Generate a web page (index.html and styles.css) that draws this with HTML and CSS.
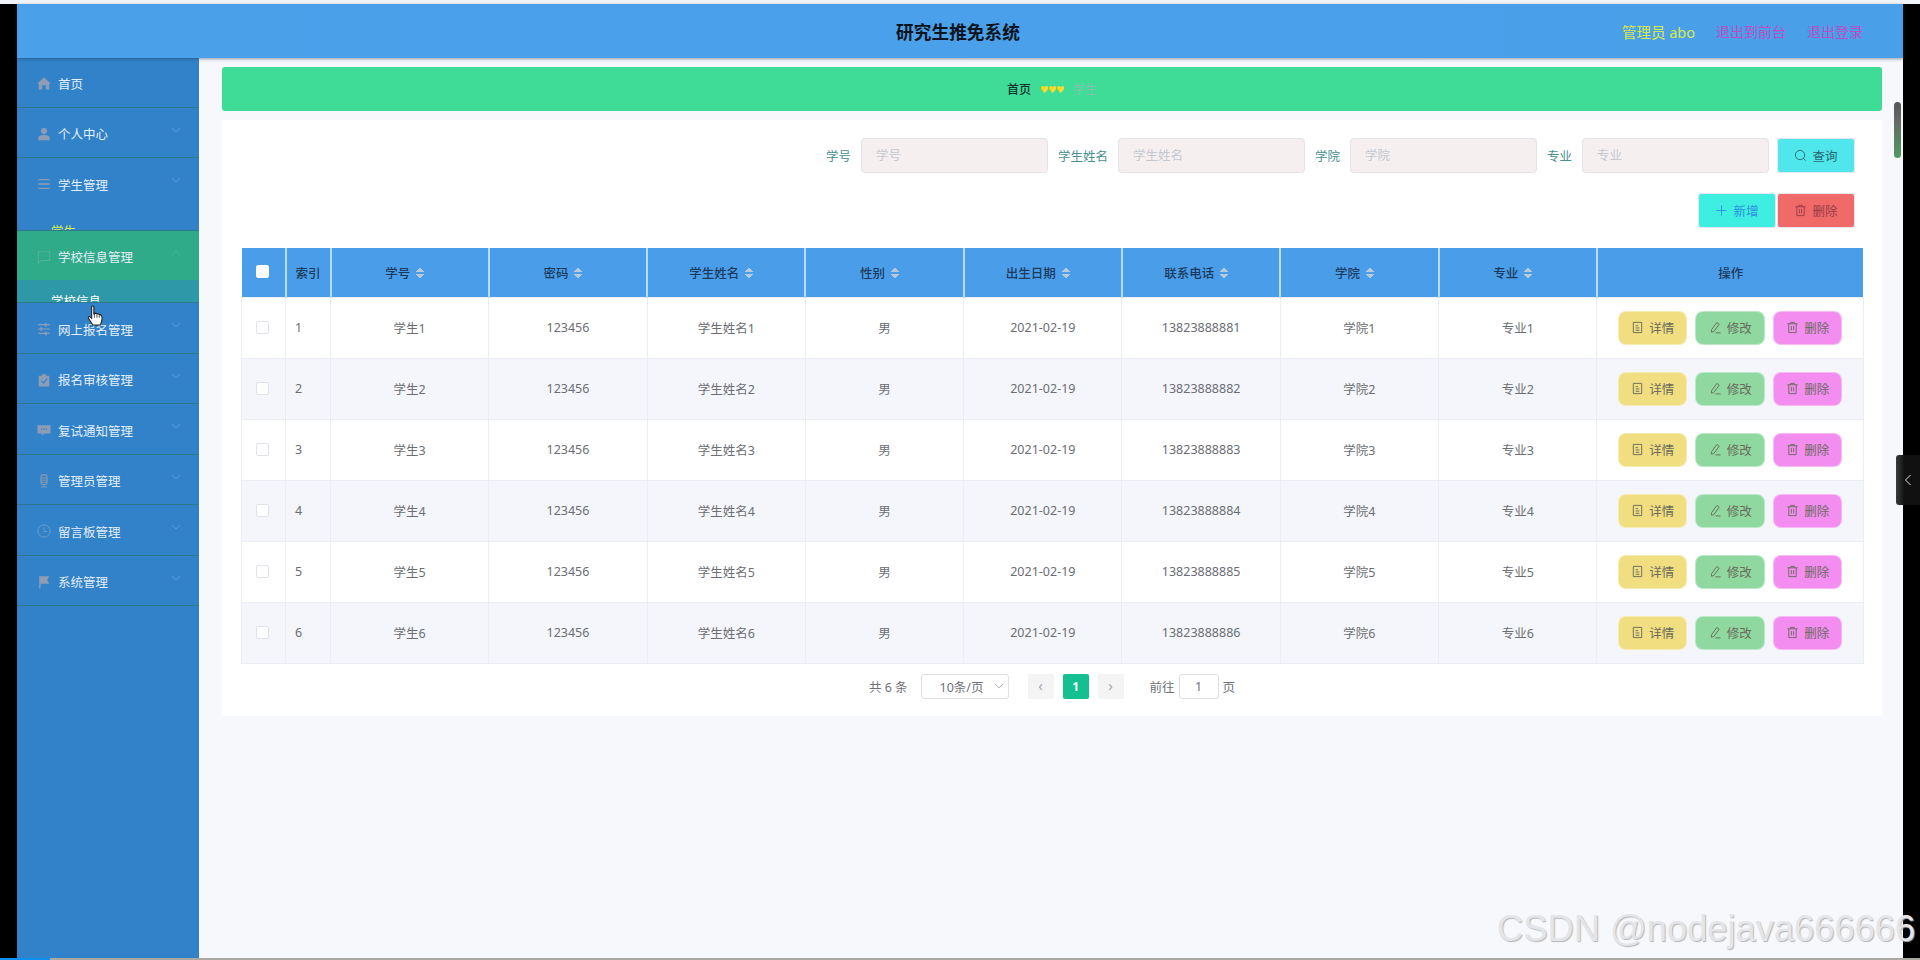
FILE: index.html
```html
<!DOCTYPE html>
<html lang="zh-CN">
<head>
    <meta charset="UTF-8">
    <title>研究生推免系统</title>
    <link rel="stylesheet" href="styles.css">
</head>
<body>
    <svg class="sprite" aria-hidden="true">
        <symbol id="i-home" viewBox="0 0 16 16"><path d="M8 1.500 .5 8.500 2 9.500V15.500H6V10.500H10V15.500H14V9.500L15.500 8.500Z" fill="currentColor"/></symbol>
        <symbol id="i-user" viewBox="0 0 16 16"><circle cx="8" cy="4.500" r="3.500" fill="currentColor"/><path d="M1.500 15V12C1.500 10 4 9 8 9S14.500 10 14.500 12V15Z" fill="currentColor"/></symbol>
        <symbol id="i-list" viewBox="0 0 16 16"><path d="M1.500 3H14.500M1.500 8H14.500M1.500 13H14.500" stroke="currentColor" stroke-width="1.600" fill="none"/></symbol>
        <symbol id="i-chat" viewBox="0 0 16 16"><path d="M1.500 2H14.500V12H5L1.500 15Z" stroke="currentColor" stroke-width="1.200" fill="none"/></symbol>
        <symbol id="i-slider" viewBox="0 0 16 16"><path d="M1.500 3H14.500M1.500 8H14.500M1.500 13H14.500" stroke="currentColor" stroke-width="1.200" fill="none"/><path d="M9 1H11V5H9ZM4 6H6V10H4ZM9 11H11V15H9Z" fill="currentColor"/></symbol>
        <symbol id="i-check" viewBox="0 0 16 16"><path d="M2 3H5.500V1.500H10.500V3H14V15.500H2Z" fill="currentColor"/><path d="M5 9 7.500 11.500 11.500 6.500" stroke="#3182c9" stroke-width="1.400" fill="none"/></symbol>
        <symbol id="i-msg" viewBox="0 0 16 16"><path d="M.5 2.500H15.500V12H8L5.500 14.500V12H.5Z" fill="currentColor"/><path d="M4.500 7H6M7.300 7H8.800M10 7H11.500" stroke="#3182c9" stroke-width="1.400"/></symbol>
        <symbol id="i-mic" viewBox="0 0 16 16"><rect x="4.500" y="1" width="7" height="11" rx="2" stroke="currentColor" stroke-width="1.200" fill="none"/><path d="M4.500 4.500H11.500M4.500 7H11.500M4.500 9.500H11.500M8 12V14.500M4.500 14.800H11.500" stroke="currentColor" stroke-width="1"/></symbol>
        <symbol id="i-clock" viewBox="0 0 16 16"><circle cx="8" cy="8" r="7" stroke="currentColor" stroke-width="1.100" fill="none"/><path d="M8 4V8.500H11.500" stroke="currentColor" stroke-width="1.100" fill="none"/></symbol>
        <symbol id="i-flag" viewBox="0 0 16 16"><path d="M2.500 1.500H14L11.500 5.500 14 10H4V15.500H2.500Z" fill="currentColor"/></symbol>
        <symbol id="i-down" viewBox="0 0 12 12"><path d="M2 4 6 8 10 4" stroke="currentColor" stroke-width="1" fill="none"/></symbol>
        <symbol id="i-doc" viewBox="0 0 14 14"><path d="M2.500 1.500H11.500V12.500H2.500ZM5 5H7.500M5 7.500H9M5 10H9" stroke="currentColor" stroke-width="1" fill="none"/></symbol>
        <symbol id="i-edit" viewBox="0 0 14 14"><path d="M8.500 1.500 11 3.500 5 11.500 2.500 12 2.800 9.300ZM7 12.800H12.500" stroke="currentColor" stroke-width="1" fill="none"/></symbol>
        <symbol id="i-trash" viewBox="0 0 14 14"><path d="M1.500 3H12.500M5 3V1.500H9V3M3 3V12.500H11V3M5.800 5.500V10M8.200 5.500V10" stroke="currentColor" stroke-width="1" fill="none"/></symbol>
    </svg>

    <div class="top-line"></div>
    <div class="window">
        <header class="header">
            <h1 class="title">研究生推免系统</h1>
            <div class="user-links">
                <span class="user-name">管理员 abo</span>
                <a class="user-link">退出到前台</a>
                <a class="user-link">退出登录</a>
            </div>
        </header>
        <div class="body-wrap">
            <nav class="sidebar">
                <div class="menu-item"><div class="menu-head"><svg class="menu-icon"><use href="#i-home"/></svg>首页</div></div>
                <div class="menu-item"><div class="menu-head"><svg class="menu-icon"><use href="#i-user"/></svg>个人中心<svg class="menu-arrow"><use href="#i-down"/></svg></div></div>
                <div class="menu-item"><div class="menu-head"><svg class="menu-icon"><use href="#i-list"/></svg>学生管理<svg class="menu-arrow"><use href="#i-down"/></svg></div><div class="menu-sub sub-student">学生</div></div>
                <div class="menu-item active"><div class="menu-head"><svg class="menu-icon"><use href="#i-chat"/></svg>学校信息管理<svg class="menu-arrow up"><use href="#i-down"/></svg></div><div class="menu-sub sub-school">学校信息</div></div>
                <div class="menu-item"><div class="menu-head"><svg class="menu-icon"><use href="#i-slider"/></svg>网上报名管理<svg class="menu-arrow"><use href="#i-down"/></svg></div></div>
                <div class="menu-item"><div class="menu-head"><svg class="menu-icon"><use href="#i-check"/></svg>报名审核管理<svg class="menu-arrow"><use href="#i-down"/></svg></div></div>
                <div class="menu-item"><div class="menu-head"><svg class="menu-icon"><use href="#i-msg"/></svg>复试通知管理<svg class="menu-arrow"><use href="#i-down"/></svg></div></div>
                <div class="menu-item"><div class="menu-head"><svg class="menu-icon"><use href="#i-mic"/></svg>管理员管理<svg class="menu-arrow"><use href="#i-down"/></svg></div></div>
                <div class="menu-item"><div class="menu-head"><svg class="menu-icon icon-faint"><use href="#i-clock"/></svg>留言板管理<svg class="menu-arrow"><use href="#i-down"/></svg></div></div>
                <div class="menu-item"><div class="menu-head"><svg class="menu-icon"><use href="#i-flag"/></svg>系统管理<svg class="menu-arrow"><use href="#i-down"/></svg></div></div>
            </nav>
            <main class="main">
                <div class="crumb">
                    <span class="crumb-home">首页</span>
                    <span class="crumb-sep">♥♥♥</span>
                    <span class="crumb-now">学生</span>
                </div>
                <section class="card">
                    <div class="search-row">
                        <label class="search-label">学号</label><input class="search-input" placeholder="学号">
                        <label class="search-label">学生姓名</label><input class="search-input" placeholder="学生姓名">
                        <label class="search-label">学院</label><input class="search-input" placeholder="学院">
                        <label class="search-label">专业</label><input class="search-input" placeholder="专业">
                        <button class="btn btn-query"><svg class="btn-icon" viewBox="0 0 14 14"><circle cx="6.500" cy="6.500" r="5" stroke="currentColor" fill="none"/><path d="M10 10 12.500 12.500" stroke="currentColor"/></svg>查询</button>
                    </div>
                    <div class="action-row">
                        <button class="btn btn-add"><svg class="btn-icon" viewBox="0 0 14 14"><path d="M7 1.500V12.500M1.500 7H12.500" stroke="currentColor"/></svg>新增</button>
                        <button class="btn btn-del"><svg class="btn-icon"><use href="#i-trash"/></svg>删除</button>
                    </div>
                    <table class="grid">
                        <colgroup>
                            <col class="col-check"><col class="col-index"><col class="col-data"><col class="col-data"><col class="col-data"><col class="col-data"><col class="col-data"><col class="col-data"><col class="col-data"><col class="col-data"><col class="col-ops">
                        </colgroup>
                        <thead>
                            <tr>
                                <th><span class="check head-check"></span></th>
                                <th>索引</th>
                                <th>学号<span class="sort"></span></th>
                                <th>密码<span class="sort"></span></th>
                                <th>学生姓名<span class="sort"></span></th>
                                <th>性别<span class="sort"></span></th>
                                <th>出生日期<span class="sort"></span></th>
                                <th>联系电话<span class="sort"></span></th>
                                <th>学院<span class="sort"></span></th>
                                <th>专业<span class="sort"></span></th>
                                <th>操作</th>
                            </tr>
                        </thead>
                        <tbody>
                            <tr>
                                <td><span class="check"></span></td><td class="cell-left">1</td><td>学生1</td><td>123456</td><td>学生姓名1</td><td>男</td><td>2021-02-19</td><td>13823888881</td><td>学院1</td><td>专业1</td>
                                <td><div class="ops"><button class="op op-view"><svg class="op-icon"><use href="#i-doc"/></svg>详情</button><button class="op op-edit"><svg class="op-icon"><use href="#i-edit"/></svg>修改</button><button class="op op-del"><svg class="op-icon"><use href="#i-trash"/></svg>删除</button></div></td>
                            </tr>
                            <tr>
                                <td><span class="check"></span></td><td class="cell-left">2</td><td>学生2</td><td>123456</td><td>学生姓名2</td><td>男</td><td>2021-02-19</td><td>13823888882</td><td>学院2</td><td>专业2</td>
                                <td><div class="ops"><button class="op op-view"><svg class="op-icon"><use href="#i-doc"/></svg>详情</button><button class="op op-edit"><svg class="op-icon"><use href="#i-edit"/></svg>修改</button><button class="op op-del"><svg class="op-icon"><use href="#i-trash"/></svg>删除</button></div></td>
                            </tr>
                            <tr>
                                <td><span class="check"></span></td><td class="cell-left">3</td><td>学生3</td><td>123456</td><td>学生姓名3</td><td>男</td><td>2021-02-19</td><td>13823888883</td><td>学院3</td><td>专业3</td>
                                <td><div class="ops"><button class="op op-view"><svg class="op-icon"><use href="#i-doc"/></svg>详情</button><button class="op op-edit"><svg class="op-icon"><use href="#i-edit"/></svg>修改</button><button class="op op-del"><svg class="op-icon"><use href="#i-trash"/></svg>删除</button></div></td>
                            </tr>
                            <tr>
                                <td><span class="check"></span></td><td class="cell-left">4</td><td>学生4</td><td>123456</td><td>学生姓名4</td><td>男</td><td>2021-02-19</td><td>13823888884</td><td>学院4</td><td>专业4</td>
                                <td><div class="ops"><button class="op op-view"><svg class="op-icon"><use href="#i-doc"/></svg>详情</button><button class="op op-edit"><svg class="op-icon"><use href="#i-edit"/></svg>修改</button><button class="op op-del"><svg class="op-icon"><use href="#i-trash"/></svg>删除</button></div></td>
                            </tr>
                            <tr>
                                <td><span class="check"></span></td><td class="cell-left">5</td><td>学生5</td><td>123456</td><td>学生姓名5</td><td>男</td><td>2021-02-19</td><td>13823888885</td><td>学院5</td><td>专业5</td>
                                <td><div class="ops"><button class="op op-view"><svg class="op-icon"><use href="#i-doc"/></svg>详情</button><button class="op op-edit"><svg class="op-icon"><use href="#i-edit"/></svg>修改</button><button class="op op-del"><svg class="op-icon"><use href="#i-trash"/></svg>删除</button></div></td>
                            </tr>
                            <tr>
                                <td><span class="check"></span></td><td class="cell-left">6</td><td>学生6</td><td>123456</td><td>学生姓名6</td><td>男</td><td>2021-02-19</td><td>13823888886</td><td>学院6</td><td>专业6</td>
                                <td><div class="ops"><button class="op op-view"><svg class="op-icon"><use href="#i-doc"/></svg>详情</button><button class="op op-edit"><svg class="op-icon"><use href="#i-edit"/></svg>修改</button><button class="op op-del"><svg class="op-icon"><use href="#i-trash"/></svg>删除</button></div></td>
                            </tr>
                        </tbody>
                    </table>
                    <div class="pager">
                        <span>共 6 条</span>
                        <div class="pager-size">10条/页<svg class="pager-down"><use href="#i-down"/></svg></div>
                        <div class="pager-btn">‹</div>
                        <div class="pager-btn pager-on">1</div>
                        <div class="pager-btn">›</div>
                        <span class="pager-go">前往</span>
                        <div class="pager-input">1</div>
                        <span>页</span>
                    </div>
                </section>
            </main>
        </div>
    </div>
    <div class="task-bar"><div class="task-progress"></div></div>

    <!-- things lying over the page -->
    <div class="scroll-thumb"></div>
    <div class="side-handle"><svg class="handle-icon" viewBox="0 0 12 16"><path d="M9 2 3 8 9 14" stroke="currentColor" stroke-width="1.200" fill="none"/></svg></div>
    <svg class="cursor" viewBox="0 0 16 20"><path d="M5 1.500C5.800.8 7 1 7 2.500V8L8 7.500 9.500 7.800 11 8.200 13 9C14.500 10 14.500 12 14 14L13 18H6L2.500 12.500C1.500 11 2.500 9.800 4 11L5 12Z" fill="#fff" stroke="#222" stroke-width="1"/><path d="M7.500 8V11.500M9.700 8V11.500M11.800 8.500V11.500" stroke="#222" stroke-width=".7"/></svg>
    <div class="watermark">CSDN @nodejava666666</div>
</body>
</html>
```

FILE: styles.css
```css
*{
    margin:0;
    padding:0;
    box-sizing:border-box;
}
body{
    width:1920px;
    height:960px;
    overflow:hidden;
    background:#fff;
    font-family:"Noto Sans","Noto Sans CJK SC",sans-serif;
    font-size:13px;
    color:#606266;
}
.sprite{
    display:none;
}
.top-line{
    height:4px;
    background:#f1f4f8;
}
.window{
    display:flex;
    flex-direction:column;
    height:954px;
    border-left:17px solid #000;
    border-right:17px solid #000;
}
.task-bar{
    height:2px;
    background:#a9a8a2;
}
.task-progress{
    width:50px;
    height:2px;
    background:#0b8ff0;
}

/* header */
.header{
    position:relative;
    display:flex;
    flex:none;
    justify-content:flex-end;
    align-items:center;
    height:54px;
    padding-right:40px;
    background:linear-gradient(90deg,#4aa1ea,#4a9fe9);
    box-shadow:0 1px 3px rgba(40,60,90,.5);
    z-index:2;
}
.title{
    position:absolute;
    left:0;
    right:4px;
    text-align:center;
    font-size:17.700px;
    font-weight:700;
    color:#0c1420;
}
.user-links{
    display:flex;
    align-items:center;
    gap:21px;
    font-size:14px;
}
.user-name{
    font-size:14.500px;
    color:#d6e84a;
}
.user-link{
    color:#b84fc4;
}

/* sidebar */
.body-wrap{
    display:flex;
    flex:1;
    min-height:0;
}
.sidebar{
    flex:none;
    width:182px;
    margin-top:-1px;
    background:#3182c9;
}
.menu-item{
    border-bottom:1px solid #2d7a8c;
}
.menu-head{
    display:flex;
    align-items:center;
    height:49.500px;
    padding:3px 0 0 20px;
    font-size:12.500px;
    color:#e4eef7;
}
.menu-icon{
    width:14px;
    height:14px;
    margin-right:7px;
    color:#8e9db3;
}
.icon-faint{
    color:#6a9fcd;
}
.menu-arrow{
    width:12px;
    height:12px;
    margin-left:auto;
    margin-right:17px;
    margin-top:-8px;
    color:#5c9bd0;
}
.menu-arrow.up{
    transform:rotate(180deg);
    color:#46b596;
}
.menu-sub{
    height:22px;
    overflow:hidden;
    padding-left:34px;
    font-size:12.500px;
    line-height:18px;
}
.sub-student{
    padding-top:15px;
    color:#d8ec55;
}
.sub-school{
    padding-top:13px;
    color:#fff;
    background:#2e97a8;
}
.menu-item.active .menu-head{
    background:#2fab8a;
}
.menu-item.active .menu-icon{
    color:#4db598;
}

/* main */
.main{
    flex:1;
    min-width:0;
    padding:9px 21px 0 23px;
    background:#f6f8fc;
}
.crumb{
    display:flex;
    justify-content:center;
    align-items:center;
    gap:9px;
    height:44px;
    border-radius:3px;
    background:#3fdc98;
    font-size:12px;
}
.crumb-home{
    font-weight:500;
    color:#10302a;
}
.crumb-sep{
    font-family:"DejaVu Sans",sans-serif;
    font-size:9.500px;
    letter-spacing:-.5px;
    color:#ffd91a;
}
.crumb-now{
    color:#7fc4ab;
}
.card{
    margin-top:9px;
    height:596px;
    padding:18px 19px 0;
    background:#fff;
}
.search-row,
.action-row{
    display:flex;
    justify-content:flex-end;
    align-items:center;
    height:35px;
    padding-right:8px;
}
.action-row{
    margin-top:20px;
}
.search-label{
    margin-left:10px;
    margin-right:10px;
    font-size:12.500px;
    color:#47908f;
}
.search-input{
    width:187px;
    height:35px;
    padding-left:14px;
    border:1px solid #e2e3e8;
    border-radius:4px;
    background:#f5efef;
    font-family:inherit;
    font-size:12.500px;
    outline:none;
}
.search-input::placeholder{
    color:#c4c8cf;
}
.btn{
    display:flex;
    flex:none;
    justify-content:center;
    align-items:center;
    gap:5px;
    width:78px;
    height:35px;
    border:1px solid #e4e7ed;
    border-radius:3px;
    font-family:inherit;
    font-size:12.500px;
}
.btn-icon{
    width:13px;
    height:13px;
}
.btn-query{
    margin-left:8px;
    background:#4fe6ec;
    color:#2a6a70;
}
.btn-add{
    margin-right:1px;
    background:#3eeee0;
    color:#2f8fe0;
}
.btn-del{
    background:#f06a6a;
    color:#993c45;
}

/* table */
.grid{
    width:1622px;
    margin-top:20px;
    border-collapse:collapse;
    table-layout:fixed;
}
.col-check{
    width:44px;
}
.col-index{
    width:45px;
}
.col-data{
    width:158.300px;
}
.col-ops{
    width:266.600px;
}
.grid th{
    height:49px;
    border-right:2px solid #bcdcf5;
    background:#4a9ee9;
    font-size:12.500px;
    font-weight:500;
    color:#1d3a5c;
}
.grid th:last-child{
    border-right:0;
}
.grid td{
    height:61px;
    border:1px solid #ebeef5;
    text-align:center;
    font-size:12.500px;
    color:#6b6e73;
}
.grid tbody tr:nth-child(even) td{
    background:#f5f6fb;
}
.grid .cell-left{
    padding-left:9px;
    text-align:left;
}
.check{
    display:inline-block;
    width:13px;
    height:13px;
    margin:3px 2px 0 0;
    border:1px solid #dfe2e8;
    border-radius:2px;
    background:#fff;
}
.head-check{
    border-color:#fff;
}
.sort{
    display:inline-block;
    width:8px;
    height:12px;
    margin-left:6px;
    margin-right:10px;
    vertical-align:-1px;
    background:
        linear-gradient(to top left,#b9c9da 50%,transparent 50%) 0 0/4px 5px no-repeat,
        linear-gradient(to top right,#b9c9da 50%,transparent 50%) 4px 0/4px 5px no-repeat,
        linear-gradient(to bottom left,#b9c9da 50%,transparent 50%) 0 100%/4px 5px no-repeat,
        linear-gradient(to bottom right,#b9c9da 50%,transparent 50%) 4px 100%/4px 5px no-repeat;
}
.ops{
    display:flex;
    justify-content:center;
    gap:8px;
}
.op{
    display:flex;
    justify-content:center;
    align-items:center;
    gap:5px;
    width:69.500px;
    height:34px;
    border:1px solid rgba(255,255,255,.4);
    border-radius:8px;
    font-family:inherit;
    font-size:12.500px;
    color:#6b6b5c;
}
.op-icon{
    width:13px;
    height:13px;
}
.op-view{
    background:#f1de81;
}
.op-edit{
    background:#8fd9a1;
}
.op-del{
    background:#f38df0;
}

/* pager */
.pager{
    display:flex;
    justify-content:center;
    align-items:center;
    height:25px;
    margin-top:10px;
    font-size:12.500px;
    color:#6f7177;
}
.pager-size{
    display:flex;
    justify-content:space-between;
    align-items:center;
    width:88px;
    height:25px;
    margin-left:13px;
    margin-right:19px;
    padding:0 3px 0 18px;
    border:1px solid #dcdfe6;
    border-radius:3px;
}
.pager-down{
    width:12px;
    height:12px;
    color:#b5b8bf;
}
.pager-btn{
    width:26px;
    height:25px;
    margin-right:9px;
    border-radius:2px;
    background:#f4f4f5;
    text-align:center;
    font-size:15px;
    line-height:23px;
    color:#a4a7ad;
}
.pager-on{
    background:#14c08f;
    font-size:12px;
    font-weight:700;
    line-height:25px;
    color:#fff;
}
.pager-go{
    margin-left:17px;
}
.pager-input{
    width:40px;
    height:25px;
    margin:0 4px;
    border:1px solid #dcdfe6;
    border-radius:3px;
    text-align:center;
    line-height:23px;
}

/* overlays */
.scroll-thumb{
    position:absolute;
    left:1894px;
    top:102px;
    width:7px;
    height:56px;
    border-radius:4px;
    background:linear-gradient(#555 0,#666 30%,#4f9a62 100%);
}
.side-handle{
    position:absolute;
    left:1896px;
    top:455px;
    display:flex;
    align-items:center;
    width:24px;
    height:50px;
    padding-left:7px;
    border-radius:3px 0 0 3px;
    background:linear-gradient(90deg,#3c3c3c,#111 35%);
    color:#ddd;
}
.handle-icon{
    width:10px;
    height:14px;
}
.cursor{
    position:absolute;
    left:86px;
    top:304px;
    width:18px;
    height:24px;
}
.watermark{
    position:absolute;
    left:1497px;
    top:908px;
    font-family:"Liberation Sans",Arial,sans-serif;
    font-size:36.300px;
    white-space:nowrap;
    color:#e4e5e8;
    text-shadow:1px 1px 1px #b5b5b8;
}
```
